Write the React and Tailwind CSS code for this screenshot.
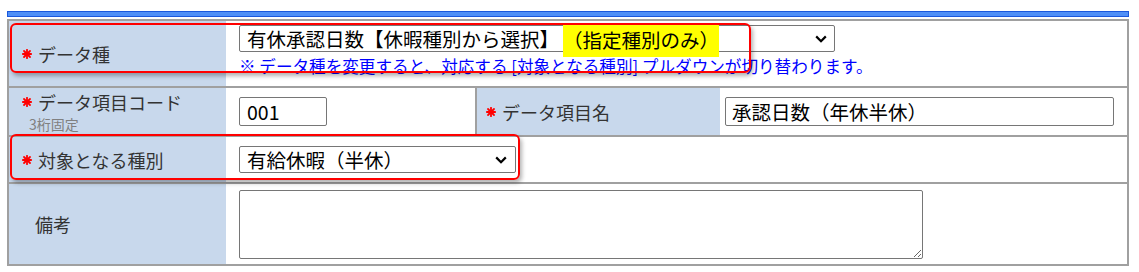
import React from "react";

const Star = () => (
  <svg width="10" height="10" viewBox="0 0 10 10" className="shrink-0">
    <g stroke="#ff0000" strokeWidth="1.8" strokeLinecap="round">
      <line x1="5" y1="0.8" x2="5" y2="9.2" />
      <line x1="0.8" y1="5" x2="9.2" y2="5" />
      <line x1="2" y1="2" x2="8" y2="8" />
      <line x1="8" y1="2" x2="2" y2="8" />
    </g>
  </svg>
);

const Chevron = () => (
  <svg width="12" height="8" viewBox="0 0 12 8" className="shrink-0">
    <path d="M1.2 1.4 L6 6.2 L10.8 1.4" fill="none" stroke="#000" strokeWidth="2.2" />
  </svg>
);

const Label = ({ children, req = true }) => (
  <div className="flex items-center text-[18px] leading-[22px] text-[#333] whitespace-nowrap">
    {req && (
      <span className="w-[16px] flex items-center">
        <Star />
      </span>
    )}
    <span>{children}</span>
  </div>
);

export default function App() {
  return (
    <div className="relative w-[1139px] h-[272px] bg-white font-['Noto_Sans_CJK_JP','Noto_Sans',sans-serif]">
      <div className="ml-[7px] w-[1122px] pt-[11px]">
        <div className="h-[6px] border border-[#1b58dc] bg-[#4f8ff6]" />
        <div className="mt-[2px] border-2 border-[#a0a0a0]">
          {/* Row 1 */}
          <div className="flex h-[65px]">
            <div className="w-[217px] bg-[#c8d8ec] flex items-center pl-[13px]">
              <Label>データ種</Label>
            </div>
            <div className="flex-1 pl-[13px] pt-[4px]">
              <div className="w-[596px] h-[27px] border border-[#767676] rounded-[2px] bg-white flex items-center pl-[7px] pr-[7px] text-[19.5px] text-black">
                <span className="flex-1 flex items-center whitespace-nowrap leading-[22px]">
                  有休承認日数【休暇種別から選択】
                  <span className="inline-block ml-[4px] bg-[#ffff00] leading-[34px] mt-[3px]">
                    （指定種別のみ）
                  </span>
                </span>
                <Chevron />
              </div>
              <div className="mt-[4px] text-[16.6px] leading-[20px] text-[#0000ff] whitespace-nowrap">
                ※ データ種を変更すると、対応する [対象となる種別] プルダウンが切り替わります。
              </div>
            </div>
          </div>
          {/* Row 2 */}
          <div className="flex h-[49px] border-t-2 border-[#a0a0a0]">
            <div className="w-[217px] bg-[#c8d8ec] flex flex-col justify-center pl-[13px]">
              <Label>データ項目コード</Label>
              <div className="ml-[7px] mt-[3px] text-[14px] leading-[16px] text-[#808080]">3桁固定</div>
            </div>
            <div className="w-[249px] flex items-center pl-[13px]">
              <div className="w-[88px] h-[29px] border border-[#767676] rounded-[2px] flex items-center pl-[7px] text-[19.5px] text-black">
                001
              </div>
            </div>
            <div className="w-[245px] bg-[#c8d8ec] border-l-2 border-[#a0a0a0] flex items-center pl-[9px]">
              <Label>データ項目名</Label>
            </div>
            <div className="flex-1 flex items-center pl-[5px]">
              <div className="w-[389px] h-[29px] border border-[#767676] rounded-[2px] flex items-center pl-[6px] text-[19.5px] text-black">
                承認日数（年休半休）
              </div>
            </div>
          </div>
          {/* Row 3 */}
          <div className="flex h-[47px] border-t-2 border-[#a0a0a0]">
            <div className="w-[217px] bg-[#c8d8ec] flex items-center pl-[13px]">
              <Label>対象となる種別</Label>
            </div>
            <div className="flex-1 flex items-center pl-[13px]">
              <div className="w-[277px] h-[27px] border border-[#767676] rounded-[2px] flex items-center pl-[7px] pr-[8px] text-[19.5px] text-black">
                <span className="flex-1 leading-[22px] whitespace-nowrap">有給休暇（半休）</span>
                <Chevron />
              </div>
            </div>
          </div>
          {/* Row 4 */}
          <div className="flex h-[82px] border-t-2 border-[#a0a0a0]">
            <div className="w-[217px] bg-[#c8d8ec] flex items-center pl-[26px]">
              <Label req={false}>備考</Label>
            </div>
            <div className="flex-1 pl-[13px] pt-[6px]">
              <textarea
                className="block w-[684px] h-[69px] border border-[#767676] rounded-[2px] bg-white resize"
                defaultValue=""
              />
            </div>
          </div>
        </div>
      </div>

      {/* annotation boxes */}
      <div className="absolute left-[10px] top-[23px] w-[741px] h-[50px] border-2 border-[#ff0000] rounded-[6px] shadow-[2px_3px_4px_rgba(0,0,0,0.3)] pointer-events-none" />
      <div className="absolute left-[10px] top-[134px] w-[510px] h-[46px] border-2 border-[#ff0000] rounded-[6px] shadow-[2px_3px_4px_rgba(0,0,0,0.3)] pointer-events-none" />
    </div>
  );
}
